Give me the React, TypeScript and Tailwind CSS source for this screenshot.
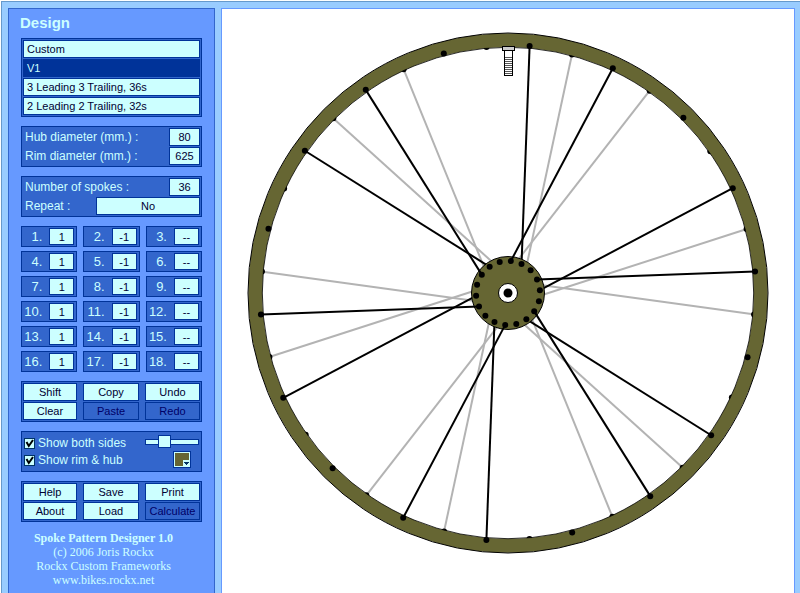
import { useState } from "react";

const presets = ["Custom", "V1", "3 Leading 3 Trailing, 36s", "2 Leading 2 Trailing, 32s"];

const pattern = Array.from({ length: 18 }, (_, i) => ["1", "-1", "--"][i % 3]);

const editActions = [
  { label: "Shift" },
  { label: "Copy" },
  { label: "Undo" },
  { label: "Clear" },
  { label: "Paste", disabled: true },
  { label: "Redo", disabled: true },
];

const fileActions = [
  { label: "Help" },
  { label: "Save" },
  { label: "Print" },
  { label: "About" },
  { label: "Load" },
  { label: "Calculate", disabled: true },
];

const groupClass = "border border-[#003399] bg-[#3366cc]";
const fieldClass =
  "border border-[#003399] bg-[#ccffff] text-center text-[11px] leading-4 text-[#000033] outline-none";

// Wheel geometry, angles are clockwise from the top
const C = 261;
const RIM_HOLES = 248;
const HUB_HOLES = 32;

function polar(angle: number, radius: number) {
  const a = (angle * Math.PI) / 180;
  return { x: C + radius * Math.sin(a), y: C - radius * Math.cos(a) };
}

const front = Array.from({ length: 18 }, (_, i) => 5 + i * 20);
const back = Array.from({ length: 18 }, (_, i) => 15 + i * 20);

function Spoke({ from, to, color }: { from: number; to: number; color: string }) {
  const rim = polar(from, RIM_HOLES);
  const hub = polar(to, HUB_HOLES);
  return <line x1={rim.x} y1={rim.y} x2={hub.x} y2={hub.y} stroke={color} strokeWidth={2} />;
}

function Hole({ angle, radius }: { angle: number; radius: number }) {
  const p = polar(angle, radius);
  return <circle cx={p.x} cy={p.y} r={3} fill="#000" />;
}

function Wheel() {
  return (
    <svg viewBox="0 0 522 522" className="mx-auto block w-[522px] max-w-full" role="img" aria-label="Wheel preview">
      {/* Far side */}
      {back.map((a, i) =>
        i % 3 === 2 ? null : (
          <Spoke key={a} from={a} to={i % 3 === 0 ? a + 20 : a - 20} color="#b3b3b3" />
        )
      )}
      {back.map((a) => (
        <Hole key={a} angle={a} radius={RIM_HOLES - 1} />
      ))}

      {/* Rim */}
      <circle cx={C} cy={C} r={252.7} fill="none" stroke="#666633" strokeWidth={14} />
      <circle cx={C} cy={C} r={260} fill="none" stroke="#000" />
      <circle cx={C} cy={C} r={245.7} fill="none" stroke="#000" strokeWidth={0.8} />

      {/* Near side, spokes passing under the hub flange */}
      {front.map((a, i) => (i % 3 === 0 ? <Spoke key={a} from={a} to={a + 20} color="#000" /> : null))}
      <circle cx={C} cy={C} r={36.5} fill="#666633" stroke="#000" />
      {front.map((a, i) => (i % 3 === 1 ? <Spoke key={a} from={a} to={a - 20} color="#000" /> : null))}
      {front.map((a) => (
        <g key={a}>
          <Hole angle={a} radius={RIM_HOLES} />
          <Hole angle={a} radius={HUB_HOLES} />
        </g>
      ))}
      <circle cx={C} cy={C} r={9.5} fill="#fff" stroke="#000" />
      <circle cx={C} cy={C} r={4.5} fill="#000" />

      {/* Valve */}
      <g shapeRendering="crispEdges" stroke="#000">
        <rect x={257.5} y={18.5} width={8} height={25} fill="#fff" />
        <rect x={255.5} y={14.5} width={12} height={4} fill="#ccc" />
        {[25, 27, 29, 31, 33, 35, 37, 39, 41].map((y) => (
          <line key={y} x1={258} x2={265} y1={y + 0.5} y2={y + 0.5} stroke="#555" />
        ))}
      </g>
    </svg>
  );
}

function ActionGrid({ actions }: { actions: { label: string; disabled?: boolean }[] }) {
  return (
    <div className={`${groupClass} grid grid-cols-[54fr_56fr_55fr] gap-x-1.5 gap-y-px p-px`}>
      {actions.map((a) => (
        <button
          key={a.label}
          type="button"
          disabled={a.disabled}
          className="h-[18px] border border-[#003399] bg-[#ccffff] text-[11px] leading-4 text-[#000033] disabled:bg-[#3366cc] disabled:text-[#000066]"
        >
          {a.label}
        </button>
      ))}
    </div>
  );
}

function NumberRow({ id, label, value }: { id: string; label: string; value: string }) {
  return (
    <div className="flex items-center justify-between">
      <label htmlFor={id} className="pl-0.5">
        {label}
      </label>
      <input id={id} defaultValue={value} className={`${fieldClass} h-[18px] w-[31px]`} />
    </div>
  );
}

function CheckRow({ label, checked, onChange }: { label: string; checked: boolean; onChange: () => void }) {
  return (
    <label className="flex items-center gap-[3px]">
      <span className="relative flex size-[11px]">
        <input
          type="checkbox"
          checked={checked}
          onChange={onChange}
          className="size-[11px] appearance-none border border-[#003366] bg-[#ccffff]"
        />
        {checked && (
          <svg viewBox="0 0 11 11" className="pointer-events-none absolute inset-0" fill="none" stroke="#000" strokeWidth={2}>
            <path d="M2.5 4 L4.8 8 L9 2" />
          </svg>
        )}
      </span>
      {label}
    </label>
  );
}

export default function App() {
  const [selected, setSelected] = useState("V1");
  const [bothSides, setBothSides] = useState(true);
  const [rimHub, setRimHub] = useState(true);

  return (
    <div className="min-h-screen bg-white pt-px pl-px font-['Liberation_Sans',Arial,sans-serif]">
      <div className="flex min-h-[calc(100vh-1px)] gap-1.5 border-t border-l border-[#6699cc] bg-[#99ccff] pt-1.5 pr-[5px] pl-1.5">
        <aside className="flex w-[207px] shrink-0 flex-col border border-b-0 border-[#3366cc] bg-[#6699ff] px-3 text-xs text-[#ccffff]">
          <h1 className="-ml-px pt-1 text-[15px] leading-5 font-bold">Design</h1>

          <ul className={`${groupClass} mt-[5px] flex flex-col gap-px p-px`}>
            {presets.map((p) => (
              <li key={p} className="flex">
                <button
                  type="button"
                  aria-pressed={p === selected}
                  onClick={() => setSelected(p)}
                  className="h-[18px] w-full border border-[#003399] bg-[#ccffff] px-[3px] text-left text-[11px] leading-4 text-[#000033] aria-pressed:bg-[#003399] aria-pressed:text-[#ccffff]"
                >
                  {p}
                </button>
              </li>
            ))}
          </ul>

          <div className={`${groupClass} mt-[9px] flex flex-col gap-px p-px`}>
            <NumberRow id="hub" label="Hub diameter (mm.) :" value="80" />
            <NumberRow id="rim" label="Rim diameter (mm.) :" value="625" />
          </div>

          <div className={`${groupClass} mt-[9px] flex flex-col gap-px p-px`}>
            <NumberRow id="spokes" label="Number of spokes :" value="36" />
            <div className="flex items-center justify-between">
              <label htmlFor="repeat" className="pl-0.5">
                Repeat :
              </label>
              <select id="repeat" className={`${fieldClass} h-[18px] w-[104px] appearance-none`}>
                <option>No</option>
                <option>Yes</option>
              </select>
            </div>
          </div>

          <div className="mt-[9px] grid grid-cols-3 gap-x-1.5 gap-y-1">
            {pattern.map((v, i) => (
              <div key={i} className={`${groupClass} flex items-center justify-end gap-[7px] py-px pr-0.5`}>
                <label htmlFor={`spoke-${i}`} className="text-[13px] leading-4">
                  {i + 1}.
                </label>
                <input id={`spoke-${i}`} defaultValue={v} className={`${fieldClass} h-[17px] w-[25px]`} />
              </div>
            ))}
          </div>

          <div className="mt-[9px]">
            <ActionGrid actions={editActions} />
          </div>

          <div className={`${groupClass} mt-[9px] flex h-[41px] justify-between pt-[3px] pr-0.5 pl-0.5 leading-[17px]`}>
            <div>
              <CheckRow label="Show both sides" checked={bothSides} onChange={() => setBothSides(!bothSides)} />
              <CheckRow label="Show rim & hub" checked={rimHub} onChange={() => setRimHub(!rimHub)} />
            </div>
            <div className="flex w-[54px] flex-col pt-px">
              <input
                type="range"
                aria-label="Far side opacity"
                defaultValue={30}
                className="h-3 w-full appearance-none bg-transparent [&::-webkit-slider-runnable-track]:h-[6px] [&::-webkit-slider-runnable-track]:border [&::-webkit-slider-runnable-track]:border-[#003399] [&::-webkit-slider-runnable-track]:bg-[#ccffff] [&::-webkit-slider-thumb]:-mt-[5px] [&::-webkit-slider-thumb]:size-[13px] [&::-webkit-slider-thumb]:appearance-none [&::-webkit-slider-thumb]:border [&::-webkit-slider-thumb]:border-[#003399] [&::-webkit-slider-thumb]:bg-[#ccffff]"
              />
              <button type="button" aria-label="Rim colour" className="mt-[3px] mr-2 self-end">
                <svg viewBox="0 0 18 17" className="block h-[17px] w-[18px]" shapeRendering="crispEdges">
                  <rect width={18} height={17} fill="#003399" />
                  <rect x={1} y={1} width={16} height={15} fill="#ccffff" />
                  <rect x={2} y={2} width={14} height={13} fill="#666633" />
                  <rect x={10} y={9} width={6} height={6} fill="#ccffff" />
                  <path d="M11 11h5l-2.5 3z" fill="#003366" />
                </svg>
              </button>
            </div>
          </div>

          <div className="mt-[9px]">
            <ActionGrid actions={fileActions} />
          </div>

          <footer className="mt-[9px] pr-4 text-center font-['Liberation_Serif','Times_New_Roman',serif] text-xs leading-[14px]">
            <p className="font-bold whitespace-nowrap">Spoke Pattern Designer 1.0</p>
            <p>(c) 2006 Joris Rockx</p>
            <p>Rockx Custom Frameworks</p>
            <a href="#site">www.bikes.rockx.net</a>
          </footer>
        </aside>

        <main className="min-w-0 flex-1 border border-b-0 border-[#6699ff] bg-white pt-[23px]">
          <Wheel />
        </main>
      </div>
    </div>
  );
}
